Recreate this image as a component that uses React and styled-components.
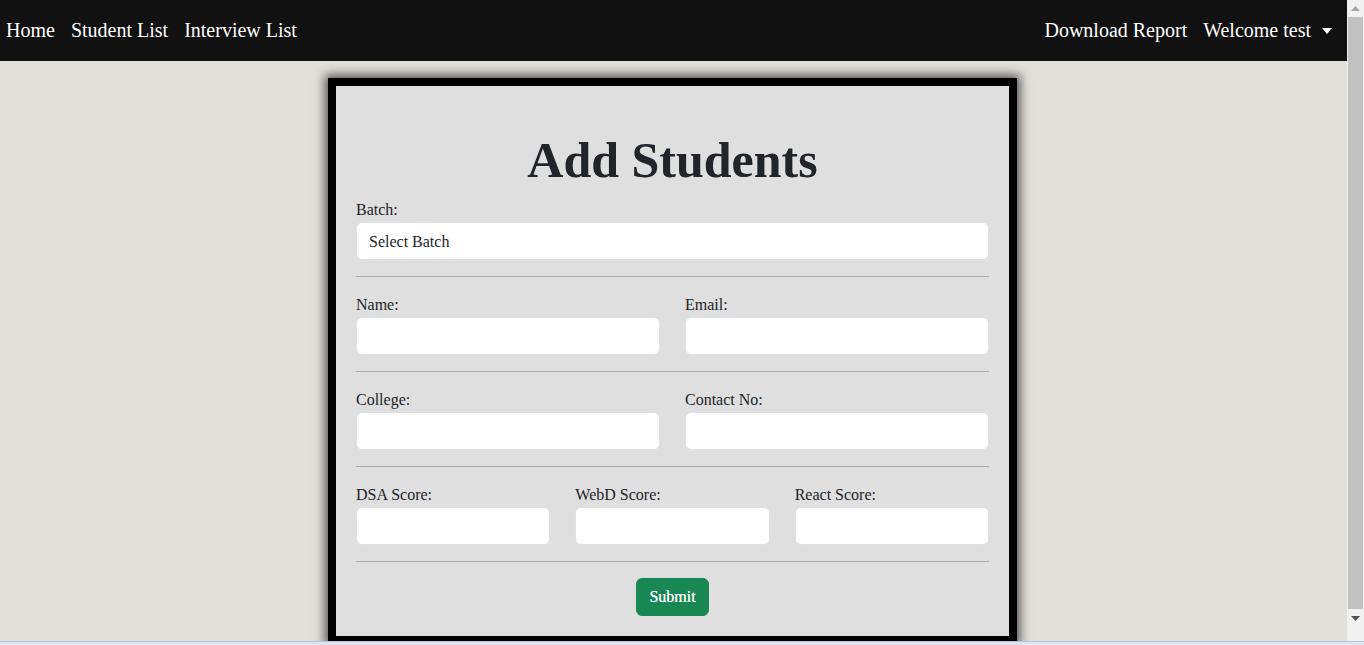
import React from "react";
import styled, { createGlobalStyle } from "styled-components";

const Global = createGlobalStyle`
  html, body { margin: 0; padding: 0; }
  body {
    background: #e3e0db;
    font-family: "Liberation Serif", "Times New Roman", serif;
    color: #212529;
    overflow: hidden;
  }
  * { box-sizing: border-box; }
`;

const Shell = styled.div`
  position: relative;
  display: flex;
  height: 645px;
`;

const Page = styled.div`
  flex: 1;
  min-width: 0;
`;

const ScrollBar = styled.div`
  width: 17px;
  height: 641px;
  background: #f1f1f1;
  display: flex;
  flex-direction: column;
  align-items: center;
`;

const ScrollArrow = styled.div`
  height: 17px;
  width: 17px;
  display: flex;
  align-items: center;
  justify-content: center;
`;

const ScrollThumb = styled.div`
  width: 15px;
  flex: 1;
  margin: 0 0 1px;
  background: #c1c1c1;
  max-height: 592px;
`;

const BottomEdge = styled.div`
  position: absolute;
  left: 0;
  right: 0;
  bottom: 0;
  height: 4px;
  background: #dfe6f0;
  border-top: 1px solid #b8c3d3;
`;

const Nav = styled.nav`
  height: 61px;
  background: #111111;
  display: flex;
  align-items: center;
  justify-content: space-between;
  padding: 0 15px 0 6px;
`;

const NavGroup = styled.div`
  display: flex;
  align-items: center;
  gap: 16px;
`;

const NavLink = styled.a`
  color: #ffffff;
  font-size: 20px;
  text-decoration: none;
  display: flex;
  align-items: center;
`;

const Caret = styled.span`
  display: inline-block;
  margin-left: 11px;
  width: 0;
  height: 0;
  border-top: 6px solid #fff;
  border-left: 5px solid transparent;
  border-right: 5px solid transparent;
`;

const Main = styled.main`
  display: flex;
  justify-content: center;
  padding: 17px 2px 0 0;
`;

const Card = styled.form`
  width: 689px;
  background: #dfdfdf;
  border: 8px solid #000;
  box-shadow: 0 0 10px 3px rgba(0, 0, 0, 0.65);
  padding: 44px 20px 20px;
`;

const Title = styled.h1`
  margin: 0 0 8px;
  text-align: center;
  font-size: 50px;
  line-height: 60px;
  font-weight: 700;
  color: #212529;
`;

const Row = styled.div`
  display: grid;
  grid-template-columns: repeat(${(p) => p.cols || 1}, minmax(0, 1fr));
  column-gap: 25px;
`;

const Field = styled.div`
  display: flex;
  flex-direction: column;
  min-width: 0;
`;

const Label = styled.label`
  font-size: 16px;
  line-height: 24px;
  color: #212529;
`;

const Input = styled.input`
  width: 100%;
  min-width: 0;
  height: 38px;
  border: 1px solid #dee2e6;
  border-radius: 6px;
  background: #fff;
  padding: 6px 12px;
  font-family: inherit;
  font-size: 16px;
  color: #212529;
  outline: none;
`;

const Select = styled.select`
  width: 100%;
  height: 38px;
  border: 1px solid #dee2e6;
  border-radius: 6px;
  background: #fff;
  padding: 6px 12px;
  font-family: inherit;
  font-size: 16px;
  color: #212529;
  appearance: none;
  outline: none;
`;

const Divider = styled.hr`
  margin: 16px 0;
  border: 0;
  border-top: 1px solid #aaaaaa;
`;

const Actions = styled.div`
  display: flex;
  justify-content: center;
`;

const Button = styled.button`
  height: 38px;
  padding: 0 12px;
  background: #198754;
  color: #fff;
  border: 1px solid #198754;
  border-radius: 6px;
  font-family: inherit;
  font-size: 16px;
  font-weight: 400;
  text-shadow: 0 0 0.4px #fff;
`;

export default function App() {
  return (
    <>
      <Global />
      <Shell>
        <Page>
          <Nav>
            <NavGroup>
              <NavLink href="#">Home</NavLink>
              <NavLink href="#">Student List</NavLink>
              <NavLink href="#">Interview List</NavLink>
            </NavGroup>
            <NavGroup>
              <NavLink href="#">Download Report</NavLink>
              <NavLink href="#">
                Welcome test
                <Caret />
              </NavLink>
            </NavGroup>
          </Nav>
          <Main>
            <Card onSubmit={(e) => e.preventDefault()}>
              <Title>Add Students</Title>
              <Row>
                <Field>
                  <Label>Batch:</Label>
                  <Select defaultValue="">
                    <option value="">Select Batch</option>
                  </Select>
                </Field>
              </Row>
              <Divider />
              <Row cols={2}>
                <Field>
                  <Label>Name:</Label>
                  <Input type="text" />
                </Field>
                <Field>
                  <Label>Email:</Label>
                  <Input type="email" />
                </Field>
              </Row>
              <Divider />
              <Row cols={2}>
                <Field>
                  <Label>College:</Label>
                  <Input type="text" />
                </Field>
                <Field>
                  <Label>Contact No:</Label>
                  <Input type="text" />
                </Field>
              </Row>
              <Divider />
              <Row cols={3}>
                <Field>
                  <Label>DSA Score:</Label>
                  <Input type="text" />
                </Field>
                <Field>
                  <Label>WebD Score:</Label>
                  <Input type="text" />
                </Field>
                <Field>
                  <Label>React Score:</Label>
                  <Input type="text" />
                </Field>
              </Row>
              <Divider />
              <Actions>
                <Button type="submit">Submit</Button>
              </Actions>
            </Card>
          </Main>
        </Page>
        <ScrollBar>
          <ScrollArrow>
            <svg width="9" height="5" viewBox="0 0 9 5">
              <path d="M0 5 L4.5 0 L9 5 Z" fill="#a3a3a3" />
            </svg>
          </ScrollArrow>
          <ScrollThumb />
          <ScrollArrow>
            <svg width="9" height="5" viewBox="0 0 9 5">
              <path d="M0 0 L4.5 5 L9 0 Z" fill="#505050" />
            </svg>
          </ScrollArrow>
        </ScrollBar>
        <BottomEdge />
      </Shell>
    </>
  );
}
